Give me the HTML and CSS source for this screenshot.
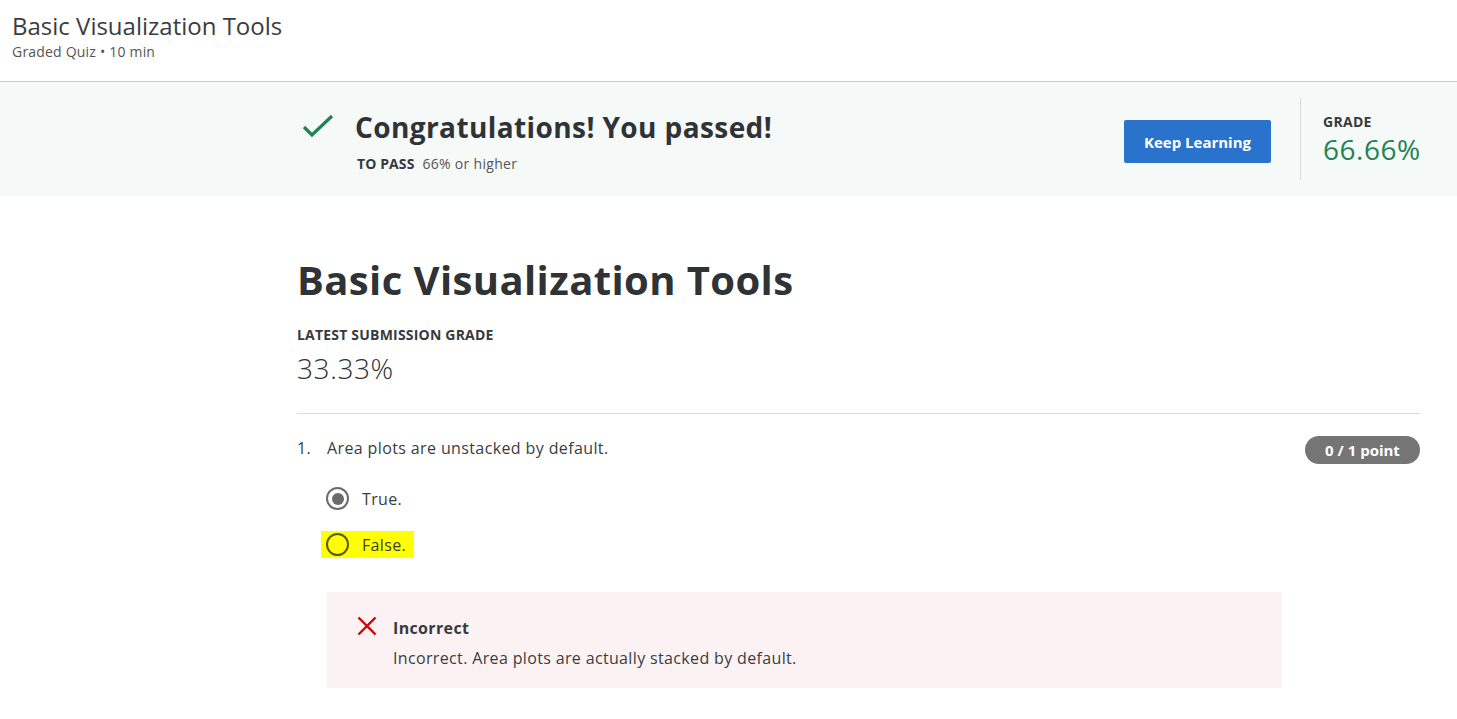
FILE: index.html
```html
<!DOCTYPE html>
<html>
<head>
<meta charset="utf-8">
<link rel="stylesheet" href="styles.css">
</head>
<body>
<header class="top">
  <div class="top-title">Basic Visualization Tools</div>
  <div class="top-sub">Graded Quiz • 10 min</div>
</header>
<section class="banner">
  <div class="banner-inner">
    <div class="pass">
      <svg class="check" width="32" height="24" viewBox="0 0 32 24"><path d="M2 13 L10 21 L30 2" fill="none" stroke="#1f8354" stroke-width="3.2"/></svg>
      <div class="pass-text">
        <div class="pass-title">Congratulations! You passed!</div>
        <div class="pass-sub"><span class="label">TO PASS</span> 66% or higher</div>
      </div>
    </div>
    <button class="btn">Keep Learning</button>
    <div class="grade">
      <div class="label">GRADE</div>
      <div class="grade-val">66.66%</div>
    </div>
  </div>
</section>
<main class="content">
  <h1 class="title">Basic Visualization Tools</h1>
  <div class="label">LATEST SUBMISSION GRADE</div>
  <div class="latest">33.33%</div>
  <hr class="rule">
  <div class="question">
    <div class="q-text"><span class="q-num">1.</span>Area plots are unstacked by default.</div>
    <div class="badge">0 / 1 point</div>
  </div>
  <div class="options">
    <div class="option"><span class="radio checked"></span><span>True.</span></div>
    <div class="option hl"><span class="radio"></span><span>False.</span></div>
  </div>
  <div class="feedback">
    <svg class="x" width="20" height="20" viewBox="0 0 20 20"><path d="M1.5 1.5 L18.5 18.5 M18.5 1.5 L1.5 18.5" stroke="#d30000" stroke-width="2.4"/></svg>
    <div>
      <div class="fb-title">Incorrect</div>
      <div class="fb-text">Incorrect. Area plots are actually stacked by default.</div>
    </div>
  </div>
</main>
</body>
</html>
```
FILE: styles.css
```css
* { box-sizing: border-box; }
body {
  margin: 0;
  font-family: "Open Sans", "Noto Sans", sans-serif;
  color: #373a3c;
  background: #fff;
}
.top {
  height: 82px;
  padding: 11px 12px 0;
  border-bottom: 1px solid #c8cbcb;
}
.top-title {
  font-size: 24px;
  line-height: 30px;
  color: #3a3d3f;
}
.top-sub {
  font-size: 14px;
  letter-spacing: 0.2px;
  line-height: 20px;
  color: #555;
  margin-top: 1px;
}
.banner {
  background: #f5f9f8;
  height: 114px;
  padding-top: 16px;
}
.banner-inner {
  margin-left: 297px;
  width: 1123px;
  display: flex;
  align-items: flex-start;
}
.pass {
  display: flex;
  align-items: flex-start;
  flex: 1;
  padding-top: 14px;
}
.check { margin: 2px 0 0 5px; }
.pass-text { margin-left: 21px; margin-top: -4px; }
.pass-title {
  font-size: 28px;
  letter-spacing: 0.4px;
  font-weight: 700;
  line-height: 38px;
  color: #2f3336;
}
.pass-sub {
  font-size: 14px;
  letter-spacing: 0.3px;
  line-height: 20px;
  margin-top: 8px;
  margin-left: 2px;
  color: #555;
}
.label {
  font-size: 14px;
  font-weight: 700;
  letter-spacing: 0.3px;
  color: #373a3c;
}
.pass-sub .label { margin-right: 4px; letter-spacing: 0.1px; }
.btn {
  margin-top: 22px;
  width: 147px;
  height: 43px;
  background: #2a73cc;
  color: #fff;
  border: 0;
  border-radius: 2px;
  font-family: inherit;
  font-size: 15px;
  font-weight: 700;
}
.grade {
  margin-left: 29px;
  border-left: 1px solid #d9dcdc;
  height: 82px;
  padding-left: 22px;
  padding-top: 14px;
}
.grade .label { line-height: 20px; }
.grade-val {
  font-size: 28px;
  letter-spacing: 0.5px;
  line-height: 34px;
  color: #1f8354;
  width: 97px;
  white-space: nowrap;
}
.content {
  margin-left: 297px;
  width: 1123px;
  padding-top: 57px;
}
.title {
  margin: 0;
  font-size: 40px;
  letter-spacing: 0.4px;
  font-weight: 700;
  line-height: 54px;
  color: #2f3336;
}
.content > .label { margin-top: 18px; line-height: 20px; letter-spacing: 0.2px; }
.latest {
  font-size: 28px;
  letter-spacing: 0.6px;
  line-height: 40px;
  font-weight: 300;
  color: #2f3336;
  margin-top: 3px;
}
.rule {
  margin: 25px 0 0;
  border: 0;
  border-top: 1px solid #dcdcdc;
}
.question {
  display: flex;
  justify-content: space-between;
  align-items: flex-start;
  margin-top: 22px;
}
.q-text { font-size: 16px; letter-spacing: 0.38px; line-height: 24px; color: #3a3d3f; }
.q-num { display: inline-block; width: 30px; }
.badge {
  background: #757575;
  color: #fff;
  font-size: 15px;
  font-weight: 700;
  border-radius: 14px;
  height: 28px;
  line-height: 28px;
  width: 115px;
  text-align: center;
}
.options {
  margin-left: 24px;
  margin-top: 21px;
  display: flex;
  flex-direction: column;
  align-items: flex-start;
  gap: 19px;
}
.option {
  display: flex;
  align-items: center;
  height: 27px;
  padding: 0 8px 0 5px;
  font-size: 16px;
  letter-spacing: 0.35px;
  color: #3a3d3f;
  gap: 13px;
}
.option.hl { background: #ffff00; }
.radio {
  width: 23px;
  height: 23px;
  border-radius: 50%;
  border: 2px solid #6b6b6b;
  position: relative;
}
.radio.checked::after {
  content: "";
  position: absolute;
  left: 3.5px; top: 3.5px;
  width: 12px; height: 12px;
  border-radius: 50%;
  background: #6b6b6b;
}
.hl .radio { border-color: #5a5a00; }
.feedback {
  margin: 34px 0 0 30px;
  width: 955px;
  height: 96px;
  background: #fcf2f3;
  display: flex;
  align-items: flex-start;
  padding: 25px 0 0 30px;
  gap: 16px;
}
.x { flex: none; margin-top: -1px; }
.fb-title { font-size: 16px; letter-spacing: 0.35px; font-weight: 700; line-height: 22px; color: #373a3c; }
.fb-text { font-size: 16px; letter-spacing: 0.35px; line-height: 24px; margin-top: 7px; color: #3a3d3f; }
```
